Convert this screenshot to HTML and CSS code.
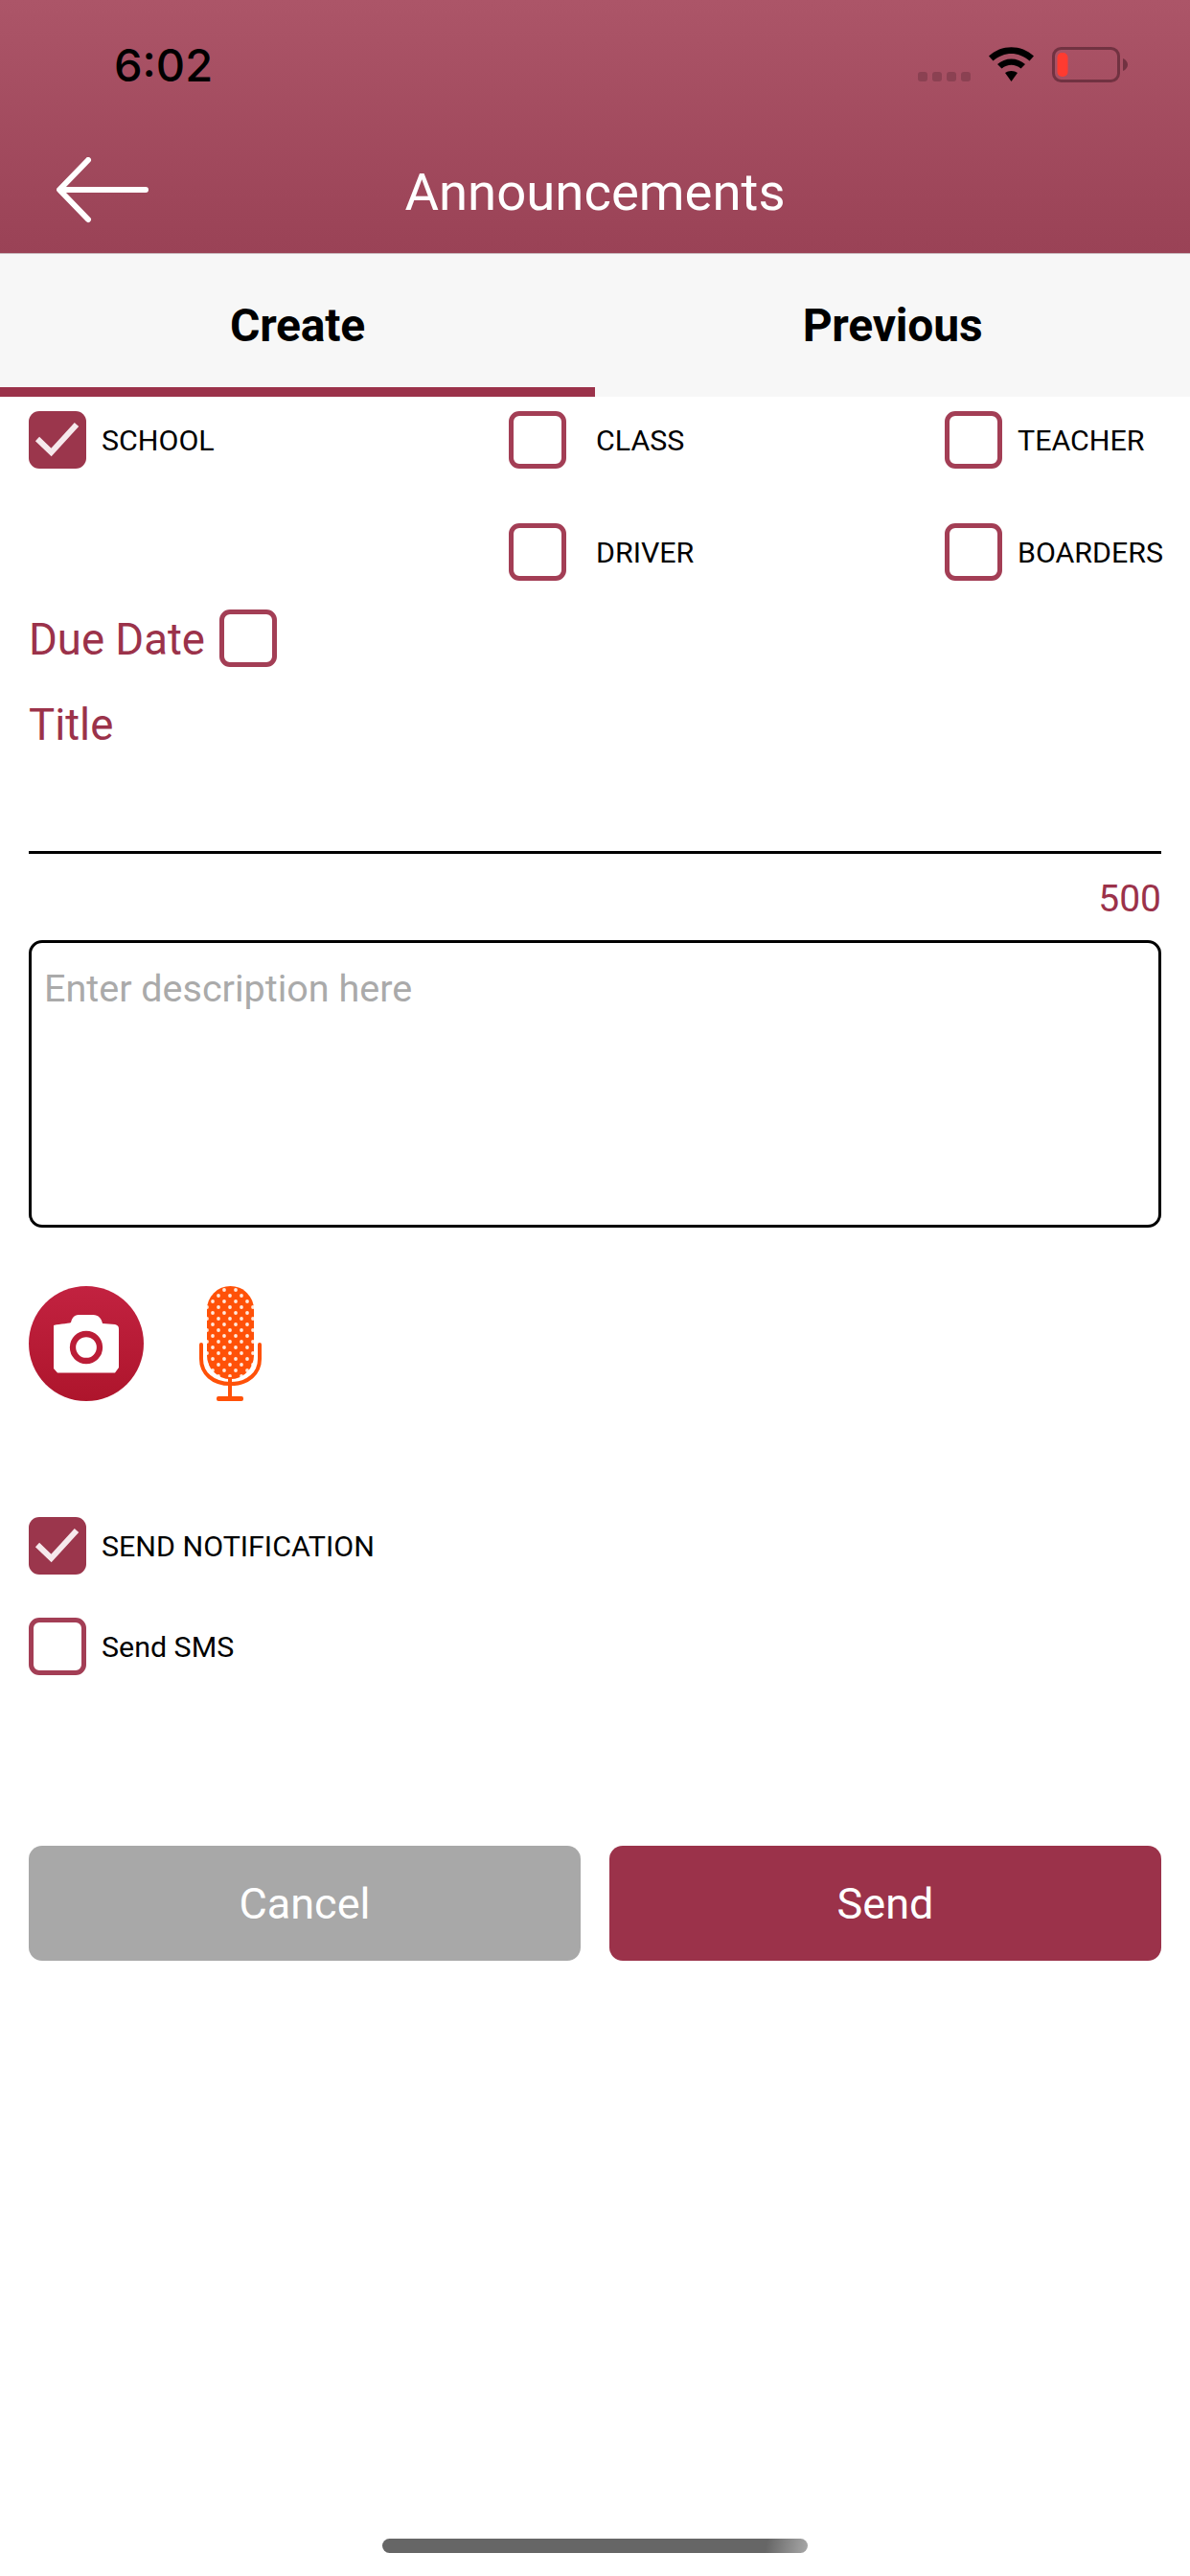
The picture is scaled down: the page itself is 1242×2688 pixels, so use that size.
FILE: index.html
```html
<!DOCTYPE html>
<html lang="en">
<head>
<meta charset="utf-8">
<title>Announcements</title>
<link rel="stylesheet" href="styles.css">
</head>
<body>
<div class="screen">
  <header class="header">
    <div class="status">
      <span class="time">6:02</span>
      <div class="status-icons">
        <div class="signal"><i></i><i></i><i></i><i></i></div>
        <svg class="wifi" width="47" height="36" viewBox="0 0 47 36"><path d="M0 9.500C13-3 34-3 47 9.500L42.500 14.500C31 4.500 16 4.500 4.500 14.500Z"/><path d="M9 18C17 10.500 30 10.500 38 18L33.500 22.500C27 17.500 20 17.500 13.500 22.500Z"/><path d="M17 27C20.500 24.300 26.500 24.300 30 27L23.500 36Z"/></svg>
        <svg class="battery" width="80" height="37" viewBox="0 0 80 37"><rect x="1.500" y="1.500" width="68" height="34" rx="8" fill="none" stroke="#713241" stroke-width="3"/><rect x="5.500" y="6" width="11" height="25" rx="5" fill="#ff3b30"/><path d="M74 12C77 13 79 16 79 18.500C79 21 77 24 74 25Z" fill="#713241"/></svg>
      </div>
    </div>
    <div class="navbar">
      <svg class="back" width="100" height="72" viewBox="0 0 100 72"><path d="M33 3L3 34L33 65M4 34H93" fill="none" stroke="#fff" stroke-width="6" stroke-linecap="round" stroke-linejoin="round"/></svg>
      <h1 class="title">Announcements</h1>
    </div>
  </header>

  <nav class="tabs">
    <div class="tab tab-active">Create</div>
    <div class="tab">Previous</div>
  </nav>

  <main class="content">
    <section class="audience">
      <label class="option"><span class="box box-on"><svg width="60" height="60" viewBox="0 0 60 60"><path d="M9 29L23.500 43L50 14" fill="none" stroke="#f6e9ec" stroke-width="6"/></svg></span><span class="option-text">SCHOOL</span></label>
      <label class="option option-wide"><span class="box"></span><span class="option-text">CLASS</span></label>
      <label class="option"><span class="box"></span><span class="option-text">TEACHER</span></label>
      <span></span>
      <label class="option option-wide"><span class="box"></span><span class="option-text">DRIVER</span></label>
      <label class="option"><span class="box"></span><span class="option-text">BOARDERS</span></label>
    </section>

    <div class="due"><span>Due Date</span><span class="box"></span></div>
    <div class="field-label">Title</div>
    <div class="title-line"></div>
    <div class="counter">500</div>
    <div class="description">Enter description here</div>

    <div class="media">
      <svg class="camera" width="120" height="120" viewBox="0 0 120 120">
        <defs>
          <linearGradient id="camBg" x1="0" y1="0" x2="0" y2="1"><stop offset="0" stop-color="#c22240"/><stop offset="1" stop-color="#ae152c"/></linearGradient>
        </defs>
        <circle cx="60" cy="60" r="60" fill="url(#camBg)"/>
        <path d="M26 41C27 40 42 39 44 38C45 34 47 30 52 30H67C73 30 76 34 77 39L90 40C93 41 94 42 94 45V85L90 90.500H30L26 86Z" fill="#fff"/>
        <circle cx="60" cy="64" r="14" fill="#fff" stroke="#bb1d37" stroke-width="6.300"/>
      </svg>
      <svg class="mic" width="68" height="122" viewBox="0 0 68 122">
        <defs>
          <pattern id="dots" x="0" y="0" width="12" height="12" patternUnits="userSpaceOnUse">
            <rect width="12" height="12" fill="#ff5108"/>
            <circle cx="3" cy="4" r="1.900" fill="#ffe9dc"/>
            <circle cx="9" cy="10" r="1.900" fill="#ffe9dc"/>
          </pattern>
        </defs>
        <rect x="9" y="0" width="49" height="97" rx="24.500" fill="url(#dots)"/>
        <path d="M3 61V76C3 91 15 102 33.500 102C52 102 64 91 64 76V61" fill="none" stroke="#ff5108" stroke-width="4" stroke-linecap="round"/>
        <path d="M33 95V118" stroke="#ff5108" stroke-width="4"/>
        <rect x="19" y="115" width="28" height="5" rx="2" fill="#ff5108"/>
      </svg>
    </div>

    <section class="sends">
      <label class="option"><span class="box box-on"><svg width="60" height="60" viewBox="0 0 60 60"><path d="M9 29L23.500 43L50 14" fill="none" stroke="#f6e9ec" stroke-width="6"/></svg></span><span class="option-text">SEND NOTIFICATION</span></label>
      <label class="option"><span class="box"></span><span class="option-text">Send SMS</span></label>
    </section>

    <div class="actions">
      <button class="btn btn-cancel" type="button">Cancel</button>
      <button class="btn btn-send" type="button">Send</button>
    </div>
  </main>

  <div class="home-wrap"><div class="home-bar"></div></div>
</div>
</body>
</html>
```

FILE: styles.css
```css
* { box-sizing: border-box; }
html, body { margin: 0; padding: 0; background: #fff; }
body { font-family: Roboto, "Liberation Sans", sans-serif; }

.screen { width: 1242px; height: 2688px; display: flex; flex-direction: column; overflow: hidden; background: #fff; }

.header { height: 265px; flex: none; background: linear-gradient(#ac5568, #9a4256); border-bottom: 1px solid #c9b9bd; }
.status { height: 135px; position: relative; padding: 41px 0 0 119px; display: flex; justify-content: space-between; }
.time { font-family: Inter, Roboto, sans-serif; font-size: 47px; font-weight: 500; line-height: 54px; color: #000; }
.status-icons { position: absolute; left: 958px; top: 49px; display: flex; align-items: flex-start; }
.signal { display: flex; gap: 5px; margin-top: 26px; }
.signal i { display: block; width: 10px; height: 10px; border-radius: 3px; background: #8b4152; }
.wifi { margin-left: 19px; }
.battery { margin-left: 19px; }

.navbar { height: 129px; position: relative; display: flex; justify-content: center; }
.back { position: absolute; left: 59px; top: 29px; }
.title { margin: 0; padding-top: 34px; font-size: 54.500px; font-weight: 400; line-height: 63px; color: #fff; }

.tabs { height: 149px; flex: none; display: grid; grid-template-columns: 1fr 1fr; background: #f7f7f7; }
.tab { font-size: 48px; font-weight: 700; line-height: 56px; color: #000; text-align: center; padding: 47px 0 0; letter-spacing: -0.200px; }
.tab-active { border-bottom: 10px solid #9b324a; }

.content { flex: 1; padding: 15px 30px 0; }

.audience { display: grid; grid-template-columns: 501px 455px 1fr; row-gap: 57px; }
.option { display: flex; align-items: center; gap: 16px; height: 60px; font-size: 30.400px; color: #000; white-space: nowrap; }
.option-text { padding-top: 2px; line-height: 58px; }
.option-wide { gap: 31px; }

.box { display: block; flex: none; width: 60px; height: 60px; border: 5.500px solid #a33e55; border-radius: 11px; background: #fff; }
.box-on { background: #9b364c; border: none; }
.box-on svg { display: block; }

.due { display: flex; align-items: center; gap: 15px; margin-top: 30px; height: 60px; font-size: 45.500px; color: #9b324a; }
.due span:first-child { padding-top: 3px; }
.field-label { margin-top: 30px; font-size: 45.500px; line-height: 62px; color: #9b324a; }
.title-line { height: 3px; margin-top: 100px; background: #000; }
.counter { margin-top: 25px; font-size: 39px; line-height: 44px; text-align: right; color: #9b324a; }
.description { height: 300px; margin-top: 21px; padding: 24px 13px; border: 3px solid #000; border-radius: 14px; font-size: 39.500px; line-height: 48px; color: #aaa; }

.media { display: flex; align-items: flex-start; gap: 57px; margin-top: 61px; }
.camera, .mic { display: block; flex: none; }

.sends { display: flex; flex-direction: column; gap: 45px; margin-top: 119px; }

.actions { display: grid; grid-template-columns: 576px 576px; gap: 30px; margin-top: 178px; }
.btn { height: 120px; border: none; border-radius: 14px; font-family: inherit; font-size: 45px; color: #fff; padding: 0; }
.btn-cancel { background: #a8a8a8; }
.btn-send { background: #9b324a; }

.home-wrap { height: 39px; flex: none; display: flex; justify-content: center; }
.home-bar { width: 444px; height: 15px; border-radius: 8px; background: linear-gradient(100deg, #666 0, #666 90%, #a8a8a8 100%); }
```
